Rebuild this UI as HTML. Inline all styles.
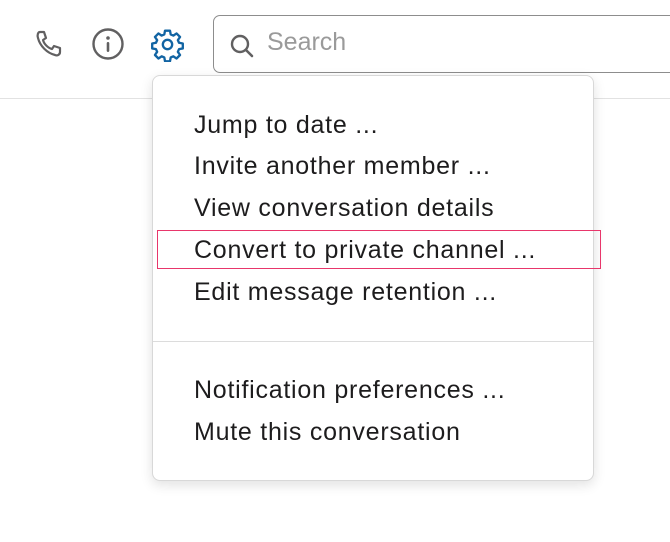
<!DOCTYPE html>
<html><head><style>
body{margin:0;width:670px;height:542px;background:#fff;position:relative;overflow:hidden;font-family:"Liberation Sans",sans-serif;}
.line{position:absolute;left:0;top:98px;width:670px;height:1px;background:#e2e2e2;}
.search{position:absolute;left:213px;top:15px;width:480px;height:56px;border:1px solid #8d8d8d;border-radius:7px;background:#fff;}
.search span{position:absolute;left:53px;top:12px;font-size:25px;color:#9a9a9a;}
.menu{position:absolute;left:152px;top:75px;width:440px;height:404px;background:#fff;border:1px solid #d8d8d8;border-radius:8px;box-shadow:0 4px 12px rgba(0,0,0,0.12);}
.item{position:absolute;left:41px;font-size:25px;letter-spacing:0.75px;color:#1d1c1d;line-height:30px;}
.div{position:absolute;left:0;right:0;top:265px;height:1px;background:#dcdcdc;}
.hl{position:absolute;left:157px;top:230px;width:442px;height:37px;border:1.5px solid #e8366b;}
</style></head><body>
<div class="line"></div>
<svg style="position:absolute;left:33px;top:28px" width="32" height="32" viewBox="0 0 32 32"><path d="M7 4 L11 4 L13 10 L10 12 C11 16 15 20 19 21 L21 18 L27 20 L27 24 C27 27 24 28 22 27 C14 25 7 18 5 10 C4 7 5 4 7 4 Z" fill="none" stroke="#616061" stroke-width="2.2" stroke-linejoin="round"/></svg>
<svg style="position:absolute;left:91px;top:27px" width="34" height="34" viewBox="0 0 34 34"><circle cx="17" cy="17" r="14.5" fill="none" stroke="#616061" stroke-width="2.4"/><circle cx="17" cy="11" r="1.8" fill="#616061"/><rect x="15.7" y="15" width="2.6" height="10" rx="1.2" fill="#616061"/></svg>
<svg style="position:absolute;left:150px;top:27px" width="35" height="35" viewBox="0 0 24 24"><path d="M10.3 2.5h3.4l.5 2.6 1.8.8 2.2-1.5 2.4 2.4-1.5 2.2.8 1.8 2.6.5v3.4l-2.6.5-.8 1.8 1.5 2.2-2.4 2.4-2.2-1.5-1.8.8-.5 2.6h-3.4l-.5-2.6-1.8-.8-2.2 1.5-2.4-2.4 1.5-2.2-.8-1.8-2.6-.5v-3.4l2.6-.5.8-1.8-1.5-2.2 2.4-2.4 2.2 1.5 1.8-.8z" fill="none" stroke="#1264a3" stroke-width="1.6" stroke-linejoin="round"/><circle cx="12" cy="12" r="3.2" fill="none" stroke="#1264a3" stroke-width="1.6"/></svg>
<div class="search"><svg style="position:absolute;left:15px;top:17px" width="26" height="26" viewBox="0 0 26 26"><circle cx="11" cy="11" r="8" fill="none" stroke="#616061" stroke-width="2.4"/><path d="M17 17 L23 23" stroke="#616061" stroke-width="2.6" stroke-linecap="round"/></svg><span>Search</span></div>
<div class="menu">
<div class="item" style="top:34px">Jump to date ...</div>
<div class="item" style="top:75px">Invite another member ...</div>
<div class="item" style="top:117px">View conversation details</div>
<div class="item" style="top:159px">Convert to private channel ...</div>
<div class="item" style="top:201px">Edit message retention ...</div>
<div class="div"></div>
<div class="item" style="top:299px">Notification preferences ...</div>
<div class="item" style="top:341px">Mute this conversation</div>
</div>
<div class="hl"></div>
</body></html>
